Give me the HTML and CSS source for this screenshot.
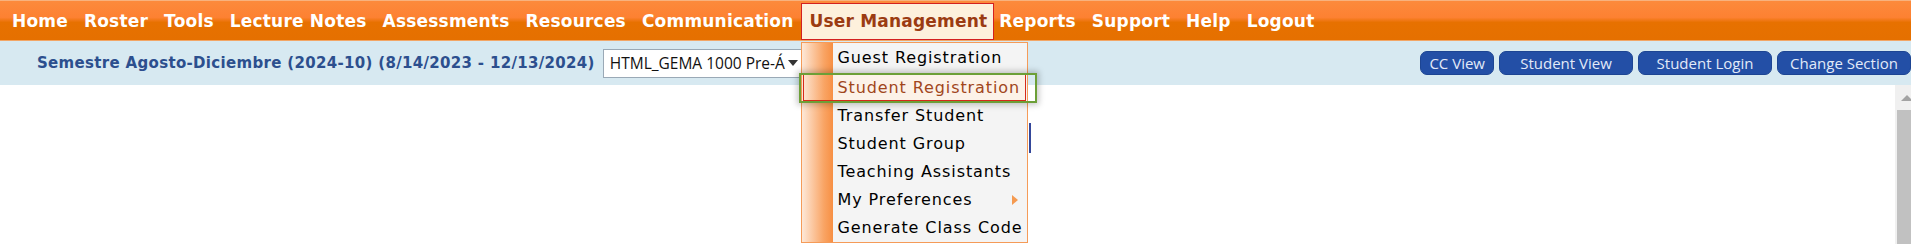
FILE: index.html
```
<!DOCTYPE html>
<html>
<head>
  <title>User Management</title>
  <link rel="stylesheet" href="styles.css">
</head>
<body>
  <div class="topnav">
    <a class="nav-item">Home</a>
    <a class="nav-item">Roster</a>
    <a class="nav-item">Tools</a>
    <a class="nav-item">Lecture Notes</a>
    <a class="nav-item">Assessments</a>
    <a class="nav-item">Resources</a>
    <a class="nav-item">Communication</a>
    <div class="nav-item active">User Management
      <ul class="dropdown">
        <li>Guest Registration</li>
        <li class="hover">Student Registration</li>
        <li>Transfer Student</li>
        <li>Student Group</li>
        <li>Teaching Assistants</li>
        <li class="has-sub">My Preferences</li>
        <li>Generate Class Code</li>
      </ul>
      <div class="callout"></div>
    </div>
    <a class="nav-item">Reports</a>
    <a class="nav-item">Support</a>
    <a class="nav-item">Help</a>
    <a class="nav-item">Logout</a>
  </div>
  <div class="subbar">
    <div class="term">
      <span class="term-label">Semestre Agosto-Diciembre (2024-10) (8/14/2023 - 12/13/2024)</span>
      <div class="section-select"><span class="select-text">HTML_GEMA 1000 Pre-Á</span><span class="caret"></span></div>
    </div>
    <div class="actions">
      <button class="btn">CC View</button>
      <button class="btn btn-wide">Student View</button>
      <button class="btn btn-wide">Student Login</button>
      <button class="btn btn-wide">Change Section</button>
    </div>
  </div>
  <div class="content">
    <div class="frame">
      <div class="peek"></div>
    </div>
    <div class="scrollbar">
      <div class="sb-up"></div>
      <div class="sb-thumb"></div>
    </div>
  </div>
</body>
</html>
```
FILE: styles.css
```
body {
  margin: 0;
  padding: 0;
  background-color: #fff;
  font-family: "DejaVu Sans", Verdana, sans-serif;
  height: 244px;
  overflow: hidden;
  display: flex;
  flex-direction: column;
}
.topnav {
  display: flex;
  align-items: flex-end;
  height: 39px;
  padding-left: 4px;
  border-top: 1px solid #f8b27e;
  border-bottom: 1px solid #f2a666;
  background: linear-gradient(#fc8a3c 0%, #fd8132 42%, #e77100 55%, #e57000 100%);
  flex-shrink: 0;
}
.nav-item {
  position: relative;
  height: 37px;
  line-height: 36px;
  padding: 0 8px;
  color: #fff;
  font-weight: bold;
  font-size: 17px;
  letter-spacing: 0.2px;
  white-space: nowrap;
  cursor: pointer;
}
.nav-item.active {
  padding: 0 6px 0 7px;
  margin-right: -3px;
  height: 35px;
  line-height: 35px;
  border: 1px solid #d32020;
  background-color: #fdf0dc;
  color: #9b3b12;
}
.dropdown {
  position: absolute;
  top: 38px;
  left: -1px;
  width: 225px;
  margin: 0;
  padding: 1px 0 0 0;
  list-style: none;
  border: 1px solid #f59b58;
  background: linear-gradient(to right, #fde8d8 0, #f9a464 22px, #f78f43 31px, #f4f4f4 31px);
  font-weight: normal;
  font-size: 16px;
  letter-spacing: 0.9px;
  color: #000;
}
.dropdown li {
  height: 28px;
  line-height: 28px;
  padding-left: 35px;
  position: relative;
}
.dropdown li.hover {
  height: 25px;
  line-height: 25px;
  margin: 2px 0 1px 1px;
  width: 188px;
  padding-left: 33px;
  border: 1px solid #d62a1a;
  background: linear-gradient(to right, rgba(253,232,216,0.2) 0, rgba(249,164,100,0.2) 21px, rgba(247,143,67,0) 30px, #fcf2e8 30px);
  color: #a1461c;
}
.dropdown li.has-sub::after {
  content: "";
  position: absolute;
  right: 9px;
  top: 9px;
  border-left: 6px solid #f59a50;
  border-top: 5px solid transparent;
  border-bottom: 5px solid transparent;
}
.callout {
  position: absolute;
  top: 69px;
  left: -3px;
  width: 234px;
  height: 26px;
  border: 2px solid #6c9f37;
  box-shadow: 0 0 6px 2px rgba(0,0,0,0.22);
}
.subbar {
  display: flex;
  justify-content: space-between;
  align-items: center;
  height: 44px;
  padding-left: 37px;
  background-color: #d7e9f1;
  flex-shrink: 0;
}
.term {
  display: flex;
  align-items: center;
  gap: 8px;
}
.term-label {
  color: #2c4f8e;
  font-weight: bold;
  font-size: 15px;
  letter-spacing: 0.32px;
  white-space: nowrap;
}
.section-select {
  width: 191px;
  height: 27px;
  padding-left: 6px;
  border: 1px solid #9aa9b6;
  background-color: #fff;
  font-family: "Open Sans", sans-serif;
  font-size: 15.5px;
  color: #111;
  display: flex;
  align-items: center;
  gap: 3px;
  white-space: nowrap;
  overflow: hidden;
}
.caret {
  flex-shrink: 0;
  border-top: 6px solid #333;
  border-left: 5px solid transparent;
  border-right: 5px solid transparent;
}
.actions {
  display: flex;
  gap: 5px;
}
.btn {
  height: 24px;
  padding: 0 8px;
  border: 1px solid #1d4593;
  border-radius: 7px;
  background-color: #234fa6;
  color: #e2eaf8;
  font-family: "Open Sans", sans-serif;
  font-size: 15px;
  cursor: pointer;
}
.btn-wide {
  min-width: 134px;
}
.content {
  flex-grow: 1;
  display: flex;
}
.frame {
  flex-grow: 1;
}
.peek {
  width: 1031px;
  height: 30px;
  margin-top: 38px;
  box-sizing: border-box;
  border-right: 2px solid #34479a;
}
.scrollbar {
  width: 16px;
  display: flex;
  flex-direction: column;
  background-color: #f0f0f0;
}
.sb-up {
  height: 25px;
  position: relative;
}
.sb-up::after {
  content: "";
  position: absolute;
  left: 6px;
  top: 10px;
  border-bottom: 6px solid #a3a3a3;
  border-left: 6px solid transparent;
  border-right: 6px solid transparent;
}
.sb-thumb {
  flex-grow: 1;
  margin-left: 2px;
  background-color: #c1c1c1;
}
```
